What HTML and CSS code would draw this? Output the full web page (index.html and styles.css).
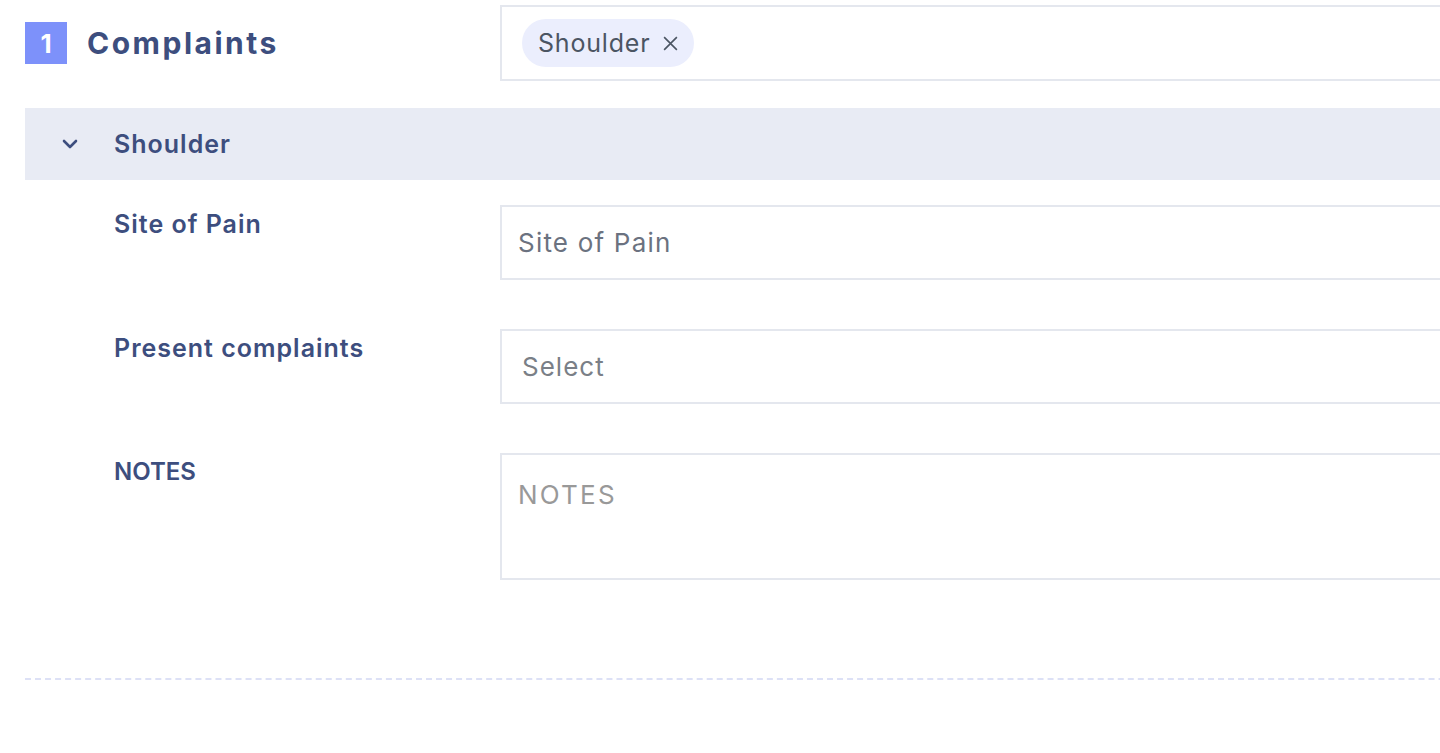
FILE: index.html
```html
<!DOCTYPE html>
<html>
<head>
<meta charset="utf-8">
<link rel="stylesheet" href="styles.css">
</head>
<body>
<div class="page">
  <div class="head-row">
    <div class="head-left">
      <span class="badge">1</span>
      <h1 class="title">Complaints</h1>
    </div>
    <div class="tag-box">
      <span class="chip">Shoulder <span class="chip-x">
        <svg width="17" height="17" viewBox="0 0 16 16"><path d="M2 2 L14 14 M14 2 L2 14" stroke="#4b5563" stroke-width="1.5" fill="none"/></svg>
      </span></span>
    </div>
  </div>

  <div class="acc-head">
    <svg class="chev" width="16" height="10" viewBox="0 0 16 10"><path d="M2 2 L8 8 L14 2" stroke="#3d4e7e" stroke-width="2.6" fill="none" stroke-linecap="round" stroke-linejoin="round"/></svg>
    <span class="acc-title">Shoulder</span>
  </div>

  <div class="fields">
    <div class="field">
      <label class="label">Site of Pain</label>
      <div class="input"><span class="ph ph-dark">Site of Pain</span></div>
    </div>
    <div class="field">
      <label class="label">Present complaints</label>
      <div class="input"><span class="ph ph-select">Select</span></div>
    </div>
    <div class="field">
      <label class="label label-caps">NOTES</label>
      <div class="input textarea"><span class="ph ph-light">NOTES</span></div>
    </div>
  </div>

  <div class="divider"></div>
</div>
</body>
</html>
```

FILE: styles.css
```css
html, body {
  margin: 0;
  padding: 0;
  background: #ffffff;
  overflow: hidden;
}
body {
  font-family: "Inter", "Noto Sans", sans-serif;
  width: 1440px;
  height: 753px;
}
.page {
  padding-left: 25px;
  width: 1600px;
}
.head-row {
  display: flex;
  align-items: center;
  padding-top: 5px;
}
.head-left {
  width: 475px;
  display: flex;
  align-items: center;
  gap: 20px;
}
.badge {
  width: 42px;
  height: 42px;
  background: #7d91fa;
  color: #fff;
  font-weight: 700;
  font-size: 26px;
  display: flex;
  align-items: center;
  justify-content: center;
}
.title {
  margin: 0;
  font-size: 30px;
  font-weight: 700;
  color: #3d4e7e;
  letter-spacing: 2.5px;
}
.tag-box {
  width: 1000px;
  height: 76px;
  box-sizing: border-box;
  border: 2px solid #e4e7ee;
  display: flex;
  align-items: center;
  padding-left: 20px;
}
.chip {
  height: 48px;
  box-sizing: border-box;
  padding: 0 15px 0 16px;
  border-radius: 24px;
  background: #ebeefd;
  color: #4b5563;
  font-size: 25px;
  letter-spacing: 0.8px;
  display: flex;
  align-items: center;
  gap: 12px;
}
.chip-x { display: flex; align-items: center; }
.acc-head {
  margin-top: 27px;
  height: 72px;
  background: #e8ebf4;
  display: flex;
  align-items: center;
  padding-left: 37px;
}
.chev { margin-right: 36px; }
.acc-title {
  font-size: 25px;
  font-weight: 600;
  color: #3d4e7e;
  letter-spacing: 1px;
}
.fields {
  padding-top: 25px;
  display: flex;
  flex-direction: column;
  gap: 49px;
}
.field {
  display: flex;
  align-items: flex-start;
}
.label {
  width: 386px;
  padding-left: 89px;
  font-size: 25px;
  font-weight: 600;
  color: #3d4e7e;
  line-height: 38px;
  letter-spacing: 1px;
}
.label-caps {
  font-size: 24px;
  letter-spacing: 0;
}
.input {
  width: 1000px;
  height: 75px;
  box-sizing: border-box;
  border: 2px solid #e4e7ee;
  display: flex;
  align-items: center;
  padding-left: 16px;
}
.textarea {
  height: 127px;
  align-items: flex-start;
  padding-top: 24px;
}
.ph { font-size: 26px; }
.ph-dark { color: #6b7280; letter-spacing: 1.2px; }
.ph-select { color: #7a7f87; padding-left: 4px; letter-spacing: 1px; }
.ph-light { color: #999999; letter-spacing: 2.2px; }
.divider {
  margin-top: 98px;
  border-top: 2px dashed #dde1f6;
}
```
